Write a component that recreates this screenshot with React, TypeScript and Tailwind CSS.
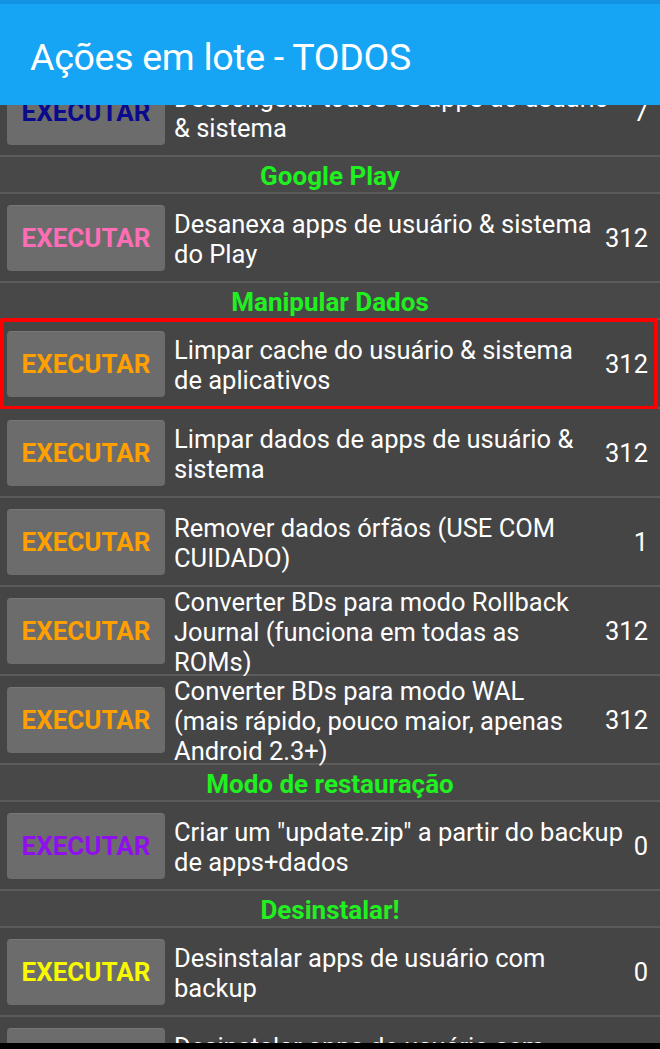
import React from 'react'

type Row = {
  kind: 'row'
  color: string
  lines: string[]
  count: string
  selected?: boolean
}
type Section = { kind: 'section'; title: string }

const items: (Row | Section)[] = [
  { kind: 'row', color: 'text-[#0a0a8c]', lines: ['Descongelar todos os apps do usuário', '& sistema'], count: '7' },
  { kind: 'section', title: 'Google Play' },
  { kind: 'row', color: 'text-[#ff6eb4]', lines: ['Desanexa apps de usuário & sistema', 'do Play'], count: '312' },
  { kind: 'section', title: 'Manipular Dados' },
  { kind: 'row', color: 'text-[#ffa000]', lines: ['Limpar cache do usuário & sistema', 'de aplicativos'], count: '312', selected: true },
  { kind: 'row', color: 'text-[#ffa000]', lines: ['Limpar dados de apps de usuário &', 'sistema'], count: '312' },
  { kind: 'row', color: 'text-[#ffa000]', lines: ['Remover dados órfãos (USE COM', 'CUIDADO)'], count: '1' },
  { kind: 'row', color: 'text-[#ffa000]', lines: ['Converter BDs para modo Rollback', 'Journal (funciona em todas as', 'ROMs)'], count: '312' },
  { kind: 'row', color: 'text-[#ffa000]', lines: ['Converter BDs para modo WAL', '(mais rápido, pouco maior, apenas', 'Android 2.3+)'], count: '312' },
  { kind: 'section', title: 'Modo de restauração' },
  { kind: 'row', color: 'text-[#9010ec]', lines: ['Criar um "update.zip" a partir do backup', 'de apps+dados'], count: '0' },
  { kind: 'section', title: 'Desinstalar!' },
  { kind: 'row', color: 'text-[#f8f800]', lines: ['Desinstalar apps de usuário com', 'backup'], count: '0' },
  { kind: 'row', color: 'text-[#f8f800]', lines: ['Desinstalar apps de usuário sem', 'backup'], count: '0' },
]

function ActionRow({ row }: { row: Row }) {
  return (
    <div className="relative flex items-center h-[89px] shrink-0 border-b-2 border-[#5b5b5b] bg-[#454545]">
      <button className="ml-[7px] w-[158px] h-[66px] shrink-0 rounded-[4px] bg-[#6c6c6c] border-t border-[#777]">
        <span className={`font-bold text-[26px] ${row.color}`}>EXECUTAR</span>
      </button>
      <div className="flex-1 ml-[9px] pt-[3px] text-[25.5px] leading-[30px] text-white">
        {row.lines.map((l, i) => (
          <div key={i} className="whitespace-nowrap">{l}</div>
        ))}
      </div>
      <div className="pr-[12px] pl-2 pt-[2px] text-[25.5px] text-white">{row.count}</div>
      {row.selected && (
        <div className="absolute left-0 right-[2px] -top-[2px] -bottom-[3px] border-4 border-[#ff0000] rounded-[2px] pointer-events-none" />
      )}
    </div>
  )
}

export default function App() {
  return (
    <div className="h-[1049px] w-[660px] flex flex-col bg-[#454545] overflow-hidden font-['Roboto',sans-serif]">
      {/* App bar */}
      <header className="relative z-10 h-[105px] shrink-0 bg-[#16a4f5] border-t-[4px] border-[#1392e2] flex items-center px-[30px]">
        <h1 className="text-[37.5px] text-white pt-[5px] tracking-[-0.3px]">Ações em lote - TODOS</h1>
      </header>

      <main className="flex-1 overflow-hidden">
        <div className="-mt-[37px] flex flex-col">
          {items.map((it, i) =>
            it.kind === 'section' ? (
              <div
                key={i}
                className="h-[37px] shrink-0 flex items-center justify-center pt-[4px] border-b-2 border-[#5b5b5b] bg-[#484848]"
              >
                <span className="font-bold text-[26px] text-[#20f020]">{it.title}</span>
              </div>
            ) : (
              <ActionRow key={i} row={it} />
            )
          )}
        </div>
      </main>

      {/* nav bar edge */}
      <div className="h-[6px] shrink-0 bg-black" />
    </div>
  )
}
